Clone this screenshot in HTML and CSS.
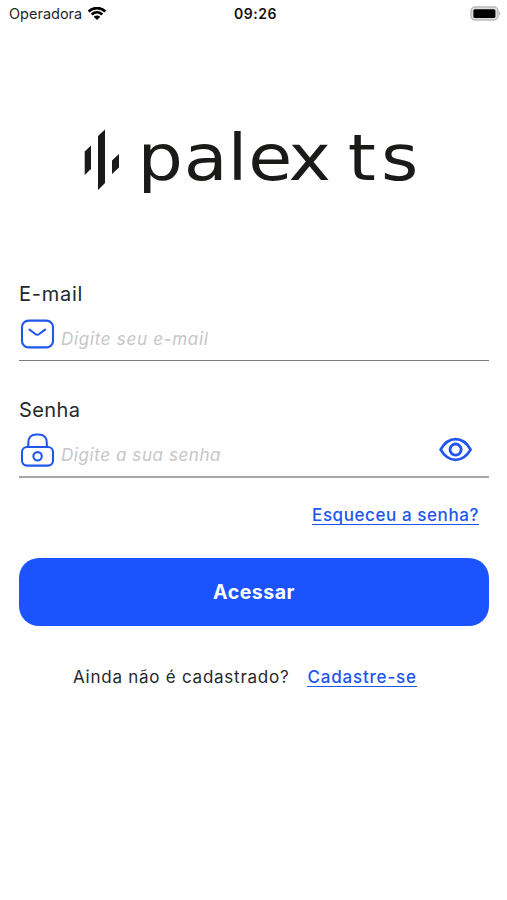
FILE: index.html
```html
<!DOCTYPE html>
<html lang="pt-BR">
<head>
<meta charset="utf-8">
<title>palex ts</title>
<link rel="stylesheet" href="styles.css">
</head>
<body>
<header class="status">
  <div class="carrier"><span class="carrier-name">Operadora</span>
    <svg class="wifi" width="20" height="14" viewBox="0 0 20 14" fill="none" stroke="#000" stroke-width="2.7"><path d="M1.6 4.4C6.4 0 13.6 0 18.4 4.4M4.7 7.5C7.8 4.7 12.2 4.7 15.3 7.5"/><path d="M10 13L6.7 9.7C8.6 8.1 11.4 8.1 13.3 9.7Z" fill="#000" stroke="none"/></svg>
  </div>
  <span class="time">09:26</span>
  <svg class="battery" width="32" height="15" viewBox="0 0 32 15"><rect x="1" y="1" width="27" height="13" rx="4" fill="#ddd" stroke="#bbb" stroke-width="1.4"/><rect x="3.4" y="3.2" width="22" height="8.8" rx="1.5" fill="#000"/><path d="M29.2 5.2Q31.4 7.4 29.2 9.6Z" fill="#aaa"/></svg>
</header>
<main class="login">
  <svg class="logo" width="340" height="90" viewBox="80 115 340 90" fill="#1a1a18">
    <path d="M84.7 151.5L91 145.5V169L84.7 175ZM98 136L105 129.5V183L98 190ZM112 160.5L119 154V167.5L112 174Z"/>
    <text class="wordmark" transform="scale(1.12 1)" y="180" x="122.8 164 203.2 221.7 257.7 285 310.4 340.2">palex ts</text>
  </svg>
  <form class="form">
    <label class="label label-email">E-mail</label>
    <div class="field field-email">
      <svg class="icon" width="36" height="36" viewBox="0 0 36 36" fill="none" stroke="#2056ec" stroke-width="2.1" stroke-linecap="round"><rect x="3" y="4.6" width="31" height="26.8" rx="6.5"/><path d="M10.5 13.6L16.3 18Q18.3 19.4 20.3 18L26.1 13.6"/></svg>
      <span class="placeholder ph-email">Digite seu e-mail</span>
    </div>
    <label class="label label-password">Senha</label>
    <div class="field">
      <svg class="icon" width="36" height="36" viewBox="0 0 36 36" fill="none" stroke="#2056ec" stroke-width="2.1"><rect x="3" y="15" width="31" height="18.6" rx="5"/><path d="M9.3 15V11Q9.3 2.5 17.5 2.5H19.5Q27.8 2.5 27.8 11V15"/><circle cx="18.6" cy="24.3" r="4.2"/></svg>
      <span class="placeholder ph-password">Digite a sua senha</span>
      <svg class="eye" width="34" height="26" viewBox="0 0 34 26" fill="none" stroke="#2056ec" stroke-width="2.8"><path d="M1.6 12.6Q7.6 2.2 16.6 2.2T31.6 12.6Q25.6 22.8 16.6 22.8T1.6 12.6Z" stroke-linejoin="round"/><circle cx="16.6" cy="12.6" r="5.6"/></svg>
    </div>
    <a class="link forgot">Esqueceu a senha?</a>
    <div class="submit"><span class="submit-text">Acessar</span></div>
    <p class="signup"><span class="question">Ainda não é cadastrado?</span><a class="link register">Cadastre-se</a></p>
  </form>
</main>
</body>
</html>
```
FILE: styles.css
```css
* { box-sizing: border-box; }
body {
  margin: 0;
  background: #fff;
  color: #25282b;
  font-family: Inter, sans-serif;
}
.status {
  display: grid;
  grid-template-columns: 1fr auto 1fr;
  align-items: center;
  height: 27px;
  padding: 0 5px 0 9px;
}
.carrier { display: flex; align-items: center; gap: 5px; }
.carrier-name { font-size: 14.5px; }
.time { font-size: 14px; font-weight: 600; color: #111; letter-spacing: .5px; }
.battery { justify-self: end; }
.wifi, .battery, .logo, .icon, .eye { display: block; flex: none; }
.login { padding: 88px 18px 0 19px; }
.logo { margin-left: 61px; }
.wordmark { font: 64px "DejaVu Sans", sans-serif; }
.form { display: flex; flex-direction: column; padding-top: 74px; }
.label { height: 30px; line-height: 30px; font-size: 20px; }
.label-email { letter-spacing: .75px; }
.label-password { margin-top: 33px; letter-spacing: .4px; }
.field {
  display: flex;
  align-items: center;
  height: 53px;
  padding: 0 16px 1px 0;
  border-bottom: 2px solid #a8a8a8;
}
.field-email { height: 52px; margin-bottom: 1px; padding-bottom: 1px; border-bottom: 1px solid #7c7c7c; }
.placeholder {
  margin: 10px auto 0 6px;
  font-size: 17px;
  line-height: 24px;
  font-style: italic;
  font-weight: 400;
  color: #c6c6c6;
}
.ph-email { letter-spacing: .7px; }
.ph-password { letter-spacing: .58px; }
.link {
  color: #2056ec;
  font-size: 17px;
  font-weight: 500;
  line-height: 20px;
  height: 20px;
  border-bottom: 1px solid #2056ec;
}
.forgot { align-self: flex-end; margin: 27px 10px 0 0; letter-spacing: .58px; }
.submit {
  display: flex;
  align-items: center;
  justify-content: center;
  height: 68px;
  margin-top: 33px;
  border-radius: 20px;
  background: #1b54ff;
}
.submit-text { color: #fff; font-size: 19.5px; font-weight: 700; letter-spacing: .5px; }
.signup { display: flex; gap: 18px; margin: 41px 0 0 54px; font-size: 17px; line-height: 20px; }
.question { letter-spacing: .75px; }
.register { letter-spacing: .82px; }
```
